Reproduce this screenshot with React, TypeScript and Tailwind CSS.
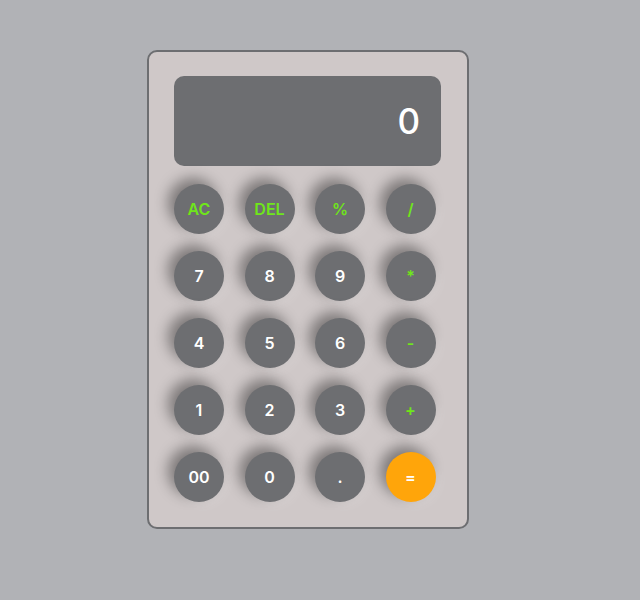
import React from 'react';

type Key = { label: string; kind: 'num' | 'op' | 'eq' };

const keys: Key[] = [
  { label: 'AC', kind: 'op' },
  { label: 'DEL', kind: 'op' },
  { label: '%', kind: 'op' },
  { label: '/', kind: 'op' },
  { label: '7', kind: 'num' },
  { label: '8', kind: 'num' },
  { label: '9', kind: 'num' },
  { label: '*', kind: 'op' },
  { label: '4', kind: 'num' },
  { label: '5', kind: 'num' },
  { label: '6', kind: 'num' },
  { label: '-', kind: 'op' },
  { label: '1', kind: 'num' },
  { label: '2', kind: 'num' },
  { label: '3', kind: 'num' },
  { label: '+', kind: 'op' },
  { label: '00', kind: 'num' },
  { label: '0', kind: 'num' },
  { label: '.', kind: 'num' },
  { label: '=', kind: 'eq' },
];

const keyColor = {
  num: 'bg-[#6d6e71] text-white',
  op: 'bg-[#6d6e71] text-[#6fe61a]',
  eq: 'bg-[#ffa50a] text-white',
};

export default function App() {
  return (
    <div className="min-h-screen w-full bg-[#b1b2b6] pt-[50px] pl-[147px] font-['Inter','Liberation_Sans',sans-serif]">
      <div className="w-[322px] rounded-[10px] border-2 border-[#6d6e71] bg-[#cfc8c8] pl-[25px] pr-[26px] pt-[24px] pb-[25px]">
        <div className="flex h-[90px] items-center justify-end rounded-[10px] bg-[#6d6e71] pr-[21px] text-[35px] font-medium text-white">
          0
        </div>
        <div className="mt-[18px] grid grid-cols-[repeat(4,50px)] gap-x-[20.5px] gap-y-[17px]">
          {keys.map((k) => (
            <button
              key={k.label}
              className={`flex h-[50px] w-[50px] items-center justify-center rounded-full text-[16px] font-semibold shadow-[-6px_-6px_14px_rgba(0,0,0,0.4),4px_4px_10px_rgba(255,255,255,0.15)] ${keyColor[k.kind]}`}
            >
              {k.label}
            </button>
          ))}
        </div>
      </div>
    </div>
  );
}
